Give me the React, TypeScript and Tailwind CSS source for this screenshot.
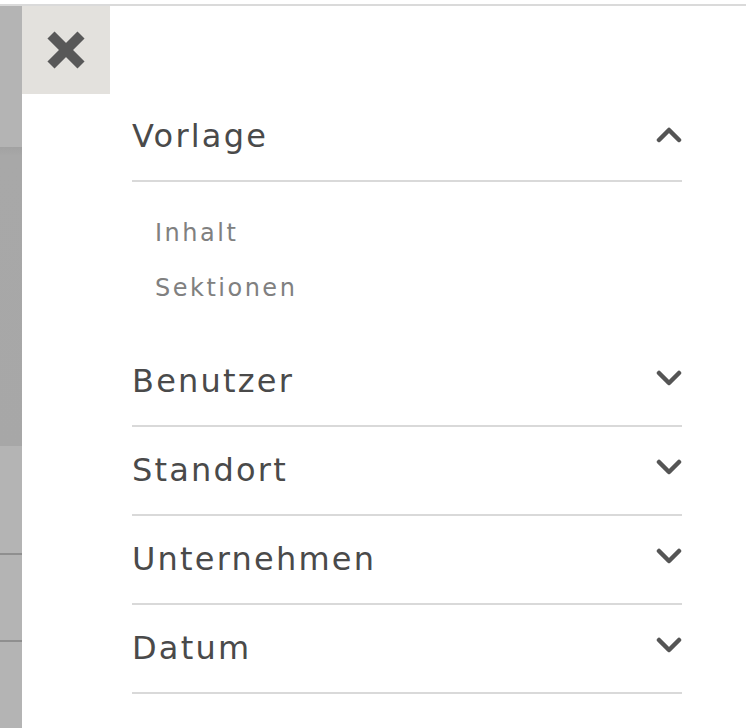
import React from "react";

function Chevron({ up }: { up?: boolean }) {
  return (
    <svg width="26" height="16" viewBox="0 0 26 16" className={up ? "mb-[3px]" : "mb-[7px]"}>
      <polyline
        points={up ? "3,13 13,3 23,13" : "3,3 13,13 23,3"}
        fill="none"
        stroke="#555555"
        strokeWidth="4.5"
        strokeLinecap="round"
        strokeLinejoin="round"
      />
    </svg>
  );
}

function Row({ label, up }: { label: string; up?: boolean }) {
  return (
    <div className="flex h-[89px] items-center justify-between border-b-2 border-[#d9d9d9]">
      <span className="mb-[2px] text-[32px] leading-none tracking-[2.2px] text-[#4a4a4a]">{label}</span>
      <Chevron up={up} />
    </div>
  );
}

export default function App() {
  return (
    <div
      className="flex h-[728px] w-[746px] flex-col overflow-hidden bg-white"
      style={{ fontFamily: "'DejaVu Sans', 'Noto Sans', sans-serif" }}
    >
      <div className="h-[4px] bg-white" />
      <div className="h-[2px] bg-[#dadada]" />
      <div className="flex flex-1">
        <div className="flex w-[22px] flex-col">
          <div className="h-[141px] bg-[#b4b4b4]" />
          <div className="h-[299px] bg-gradient-to-b from-[#a2a2a2] via-[#a8a8a8] via-[3%] to-[#a7a7a7]" />
          <div className="h-[107px] bg-[#b4b4b4]" />
          <div className="h-[2px] bg-[#8f8f8f]" />
          <div className="h-[85px] bg-[#b4b4b4]" />
          <div className="h-[2px] bg-[#8f8f8f]" />
          <div className="flex-1 bg-[#b4b4b4]" />
        </div>
        <div className="flex flex-1 flex-col bg-white">
          <div className="flex h-[88px] w-[88px] items-center justify-center bg-[#e3e1dd]">
            <svg width="38" height="38" viewBox="0 0 38 38">
              <line x1="4" y1="4" x2="34" y2="34" stroke="#585858" strokeWidth="10" />
              <line x1="34" y1="4" x2="4" y2="34" stroke="#585858" strokeWidth="10" />
            </svg>
          </div>
          <div className="ml-[110px] mt-[-1px] w-[550px]">
            <Row label="Vorlage" up />
            <div className="flex flex-col py-[23px] pl-[23px]">
              <div className="flex h-[55px] items-center text-[24px] tracking-[2.5px] text-[#808080]">Inhalt</div>
              <div className="flex h-[55px] items-center text-[24px] tracking-[2.5px] text-[#808080]">Sektionen</div>
            </div>
            <Row label="Benutzer" />
            <Row label="Standort" />
            <Row label="Unternehmen" />
            <Row label="Datum" />
          </div>
        </div>
      </div>
    </div>
  );
}
